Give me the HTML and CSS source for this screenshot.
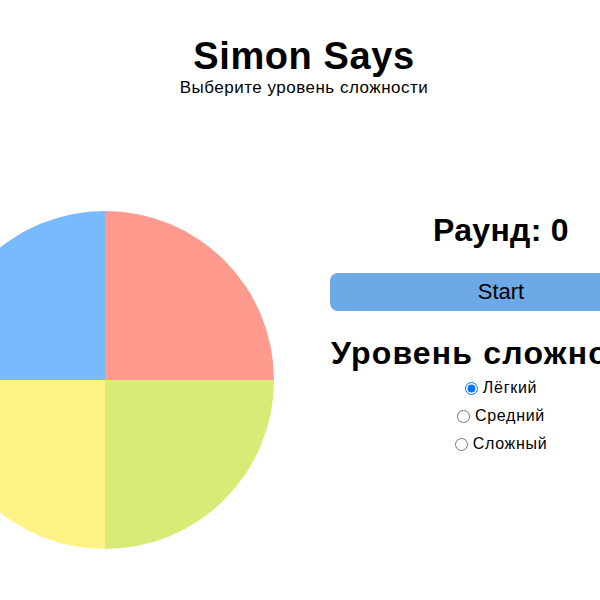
FILE: index.html
```html
<!DOCTYPE html>
<html lang="ru">
<head>
<meta charset="utf-8">
<title>Simon Says</title>
<link rel="stylesheet" href="styles.css">
</head>
<body>
<header class="header">
  <h1 class="title">Simon Says</h1>
  <p class="subtitle">Выберите уровень сложности</p>
</header>
<main class="game">
  <div class="board">
    <div class="pad pad-blue"></div>
    <div class="pad pad-red"></div>
    <div class="pad pad-yellow"></div>
    <div class="pad pad-green"></div>
  </div>
  <section class="panel">
    <h2 class="round">Раунд: 0</h2>
    <button class="start">Start</button>
    <h2 class="level-title">Уровень сложности</h2>
    <div class="levels">
      <label class="level"><input type="radio" name="level" checked>Лёгкий</label>
      <label class="level"><input type="radio" name="level">Средний</label>
      <label class="level"><input type="radio" name="level">Сложный</label>
    </div>
  </section>
</main>
</body>
</html>
```
FILE: styles.css
```css
html, body {
  overflow: hidden;
}
body {
  margin: 0;
  padding-left: 8px;
  font-family: "Liberation Sans", Arial, sans-serif;
  color: #000;
  background: #fff;
}
.header {
  text-align: center;
}
.title {
  margin: 34px 0 0;
  font-size: 38px;
  line-height: 44px;
  letter-spacing: 0.6px;
  font-weight: bold;
}
.subtitle {
  margin: 0;
  font-size: 17px;
  line-height: 20px;
  letter-spacing: 0.5px;
}
.game {
  display: flex;
  justify-content: center;
  align-items: flex-start;
  gap: 56px;
  margin-top: 113px;
}
.board {
  flex: 0 0 338px;
  width: 338px;
  height: 338px;
  border-radius: 50%;
  overflow: hidden;
  display: grid;
  grid-template-columns: 1fr 1fr;
  grid-template-rows: 1fr 1fr;
}
.pad-blue { background: #79baff; }
.pad-red { background: #ff9a8e; }
.pad-yellow { background: #fff386; }
.pad-green { background: #d9eb77; }
.panel {
  flex: 0 0 342px;
  width: 342px;
  display: flex;
  flex-direction: column;
  align-items: stretch;
  text-align: center;
  padding-top: 1px;
}
.round {
  margin: 0;
  font-size: 32px;
  line-height: 37px;
  letter-spacing: 0.3px;
  font-weight: bold;
}
.start {
  margin-top: 24px;
  height: 38px;
  border: none;
  border-radius: 8px;
  background: #6ca9e6;
  color: #000;
  font-family: "Liberation Sans", Arial, sans-serif;
  font-size: 22px;
  padding: 0;
}
.level-title {
  margin: 24px 0 0;
  padding-left: 1px;
  font-size: 32px;
  line-height: 37px;
  letter-spacing: 1.2px;
  font-weight: bold;
  white-space: nowrap;
  text-align: left;
}
.levels {
  display: flex;
  flex-direction: column;
  align-items: center;
  margin-top: 2px;
}
.level {
  display: flex;
  align-items: center;
  height: 28px;
  font-size: 16px;
  letter-spacing: 0.7px;
}
.level input {
  margin: 0 5px 0 0;
  width: 13px;
  height: 13px;
}
```
